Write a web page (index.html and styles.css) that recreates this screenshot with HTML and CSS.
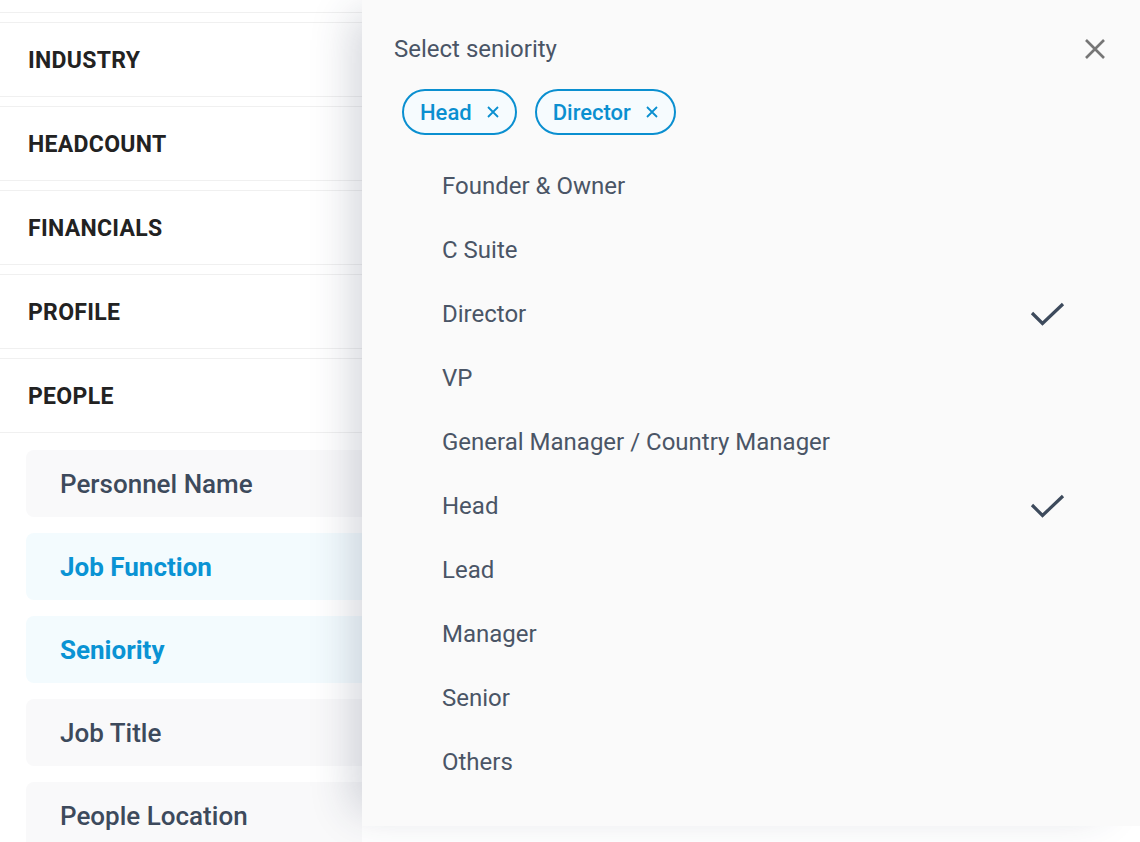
FILE: index.html
```html
<!DOCTYPE html>
<html lang="en">
<head>
  <meta charset="UTF-8">
  <meta name="viewport" content="width=device-width, initial-scale=1.0">
  <title>Filters - Seniority</title>
  <link rel="stylesheet" href="styles.css">
</head>
<body>
  <div class="filters">
    <div class="section section-stub"></div>
    <div class="section"><span>INDUSTRY</span></div>
    <div class="section"><span>HEADCOUNT</span></div>
    <div class="section"><span>FINANCIALS</span></div>
    <div class="section"><span>PROFILE</span></div>
    <div class="section section-last"><span>PEOPLE</span></div>

    <div class="sub-list">
      <div class="sub-item">Personnel Name</div>
      <div class="sub-item active">Job Function</div>
      <div class="sub-item active">Seniority</div>
      <div class="sub-item">Job Title</div>
      <div class="sub-item">People Location</div>
    </div>
  </div>

  <div class="panel">
    <div class="panel-head">
      <span class="panel-title">Select seniority</span>
      <button class="close" aria-label="Close">
        <svg width="22" height="22" viewBox="0 0 22 22"><path d="M2 2 L20 20 M20 2 L2 20" stroke="#767676" stroke-width="2.6" fill="none"/></svg>
      </button>
    </div>

    <div class="chips">
      <span class="chip">Head
        <svg class="chip-x" width="12" height="12" viewBox="0 0 12 12"><path d="M1 1 L11 11 M11 1 L1 11" stroke="#0a8fd0" stroke-width="1.8" fill="none"/></svg>
      </span>
      <span class="chip">Director
        <svg class="chip-x" width="12" height="12" viewBox="0 0 12 12"><path d="M1 1 L11 11 M11 1 L1 11" stroke="#0a8fd0" stroke-width="1.8" fill="none"/></svg>
      </span>
    </div>

    <ul class="options">
      <li>Founder &amp; Owner</li>
      <li>C Suite</li>
      <li>Director
        <svg class="check" width="38" height="28" viewBox="0 0 38 28"><path d="M3 13 L13.5 23.5 L34 4" stroke="#3d4a5c" stroke-width="3.2" fill="none"/></svg>
      </li>
      <li>VP</li>
      <li>General Manager / Country Manager</li>
      <li>Head
        <svg class="check" width="38" height="28" viewBox="0 0 38 28"><path d="M3 13 L13.5 23.5 L34 4" stroke="#3d4a5c" stroke-width="3.2" fill="none"/></svg>
      </li>
      <li>Lead</li>
      <li>Manager</li>
      <li>Senior</li>
      <li>Others</li>
    </ul>
  </div>
</body>
</html>
```

FILE: styles.css
```css
body {
  font-family: Roboto, "Liberation Sans", sans-serif;
  margin: 0;
  padding: 0;
  background-color: #ffffff;
  color: #3d4a5c;
  height: 842px;
  overflow: hidden;
}
.filters {
  width: 362px;
  overflow: hidden;
}
.section {
  height: 73px;
  box-sizing: content-box;
  border-top: 1px solid #f0f0f0;
  border-bottom: 1px solid #f0f0f0;
  margin-bottom: 9px;
  display: flex;
  align-items: center;
  padding-left: 28px;
  font-size: 23px;
  letter-spacing: 0.3px;
  font-weight: 700;
  color: #222222;
}
.section span {
  padding-top: 2px;
}
.section-stub {
  height: 12px;
  border-top: none;
}
.section-last {
  margin-bottom: 0;
}
.sub-list {
  padding: 17px 0 0 26px;
  display: flex;
  flex-direction: column;
  gap: 16px;
}
.sub-item {
  height: 67px;
  width: 400px;
  border-radius: 8px;
  background-color: #f9f9fa;
  display: flex;
  align-items: center;
  padding-left: 34px;
  font-size: 26px;
  font-weight: 500;
  color: #3d4a5c;
  flex-shrink: 0;
}
.sub-item.active {
  background-color: #f3fbfe;
  color: #0a93d4;
  font-weight: 700;
}
.panel {
  position: absolute;
  top: 0;
  left: 362px;
  width: 778px;
  height: 826px;
  background-color: #fafafa;
  box-shadow: -24px 0 40px -14px rgba(40, 50, 80, 0.2);
  box-sizing: border-box;
  padding: 35px 32px 0 32px;
}
.panel-head {
  display: flex;
  justify-content: space-between;
  align-items: center;
  height: 28px;
}
.panel-title {
  font-size: 24px;
  color: #4a5566;
}
.close {
  border: none;
  background: none;
  padding: 0;
  margin-right: 2px;
  width: 22px;
  height: 22px;
  cursor: pointer;
}
.chips {
  display: flex;
  gap: 18px;
  margin: 26px 0 0 8px;
}
.chip {
  display: inline-flex;
  align-items: center;
  height: 46px;
  box-sizing: border-box;
  padding: 0 16px 0 16px;
  border: 2px solid #0a8fd0;
  border-radius: 23px;
  background-color: #f6fbfe;
  color: #0a8fd0;
  font-size: 22px;
  font-weight: 500;
}
.chip-x {
  margin-left: 15px;
  display: block;
}
.options {
  list-style: none;
  margin: 19px 0 0 0;
  padding: 0 41px 0 48px;
}
.options li {
  height: 64px;
  display: flex;
  align-items: center;
  justify-content: space-between;
  font-size: 24px;
  color: #4a5566;
}
.check {
  display: block;
}
```
